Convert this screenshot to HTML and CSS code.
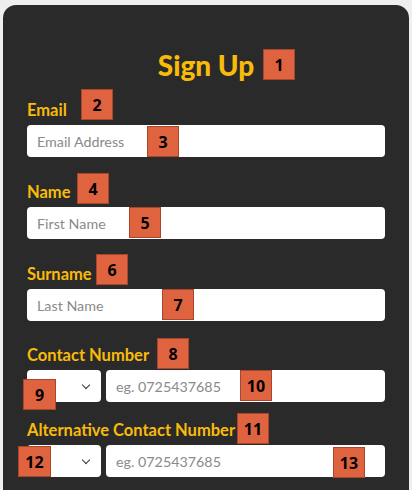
FILE: index.html
```html
<!DOCTYPE html>
<html lang="en">
<head>
<meta charset="utf-8">
<title>Sign Up</title>
<link rel="stylesheet" href="styles.css">
</head>
<body>
<div class="card">
  <h1 class="title">Sign Up</h1>
  <div class="group">
    <label class="label">Email</label>
    <input class="field" type="text" placeholder="Email Address">
  </div>
  <div class="group">
    <label class="label">Name</label>
    <input class="field" type="text" placeholder="First Name">
  </div>
  <div class="group group-surname">
    <label class="label">Surname</label>
    <input class="field" type="text" placeholder="Last Name">
  </div>
  <div class="group group-tight">
    <label class="label">Contact Number</label>
    <div class="phone-row">
      <div class="select"><span class="chev"></span></div>
      <input class="field" type="text" placeholder="eg. 0725437685">
    </div>
  </div>
  <div class="group">
    <label class="label">Alternative Contact Number</label>
    <div class="phone-row">
      <div class="select"><span class="chev"></span></div>
      <input class="field" type="text" placeholder="eg. 0725437685">
    </div>
  </div>

  <span class="badge b1">1</span>
  <span class="badge b2">2</span>
  <span class="badge b3">3</span>
  <span class="badge b4">4</span>
  <span class="badge b5">5</span>
  <span class="badge b6">6</span>
  <span class="badge b7">7</span>
  <span class="badge b8">8</span>
  <span class="badge b9">9</span>
  <span class="badge b10">10</span>
  <span class="badge b11">11</span>
  <span class="badge b12">12</span>
  <span class="badge b13">13</span>
</div>
</body>
</html>
```

FILE: styles.css
```css
* { box-sizing: border-box; }
html, body { margin: 0; padding: 0; }
body {
  background: #efefef;
  font-family: "Lato", "Noto Sans", sans-serif;
  padding: 5px 3px 0 3px;
  height: 490px;
  overflow: hidden;
}
.card {
  position: relative;
  background: #2a2a2a;
  border-radius: 13px 13px 0 0;
  padding: 40px 24px 0 24px;
  height: 485px;
  overflow: hidden;
}
.title {
  margin: 0 0 15px 0;
  text-align: center;
  color: #f9bb0a;
  font-size: 28px;
  font-weight: 900;
  line-height: 40px;
}
.group { display: flex; flex-direction: column; margin-bottom: 25px; }
.group-surname { margin-bottom: 24px; }
.group-tight { margin-bottom: 18px; }
.label {
  color: #f9bb0a;
  font-weight: 700;
  font-size: 16.5px;
  line-height: 20px;
  margin-bottom: 5px;
}
.field {
  width: 100%;
  height: 32px;
  border: none;
  border-radius: 4px;
  background: #fff;
  padding: 0 10px;
  font-family: inherit;
  font-size: 14.3px;
  outline: none;
}
.field::placeholder { color: #8a8a8a; }
.phone-row { display: flex; gap: 5px; }
.select {
  flex: 0 0 74px;
  height: 32px;
  background: #fff;
  border-radius: 4px;
  display: flex;
  align-items: center;
  justify-content: flex-end;
  padding-right: 12px;
}
.chev {
  width: 6px; height: 6px;
  border-right: 1.6px solid #333;
  border-bottom: 1.6px solid #333;
  transform: rotate(45deg);
  margin-top: -3px;
}
.phone-row .field { flex: 1; }
.badge {
  position: absolute;
  width: 32px;
  height: 31px;
  background: #e06340;
  border: 1px solid #a9452d;
  color: #000;
  font-weight: 700;
  font-size: 16px;
  display: flex;
  align-items: center;
  justify-content: center;
  font-family: "Noto Sans", sans-serif;
}
.b1 { left: 260px; top: 44px; }
.b2 { left: 78px; top: 84px; }
.b3 { left: 144px; top: 121px; }
.b4 { left: 74px; top: 168px; }
.b5 { left: 126px; top: 202px; }
.b6 { left: 93px; top: 249px; }
.b7 { left: 159px; top: 284px; }
.b8 { left: 154px; top: 333px; }
.b9 { left: 20px; top: 374px; width: 33px; }
.b10 { left: 237px; top: 365px; }
.b11 { left: 234px; top: 408px; }
.b12 { left: 15px; top: 441px; width: 33px; }
.b13 { left: 330px; top: 442px; }
```
